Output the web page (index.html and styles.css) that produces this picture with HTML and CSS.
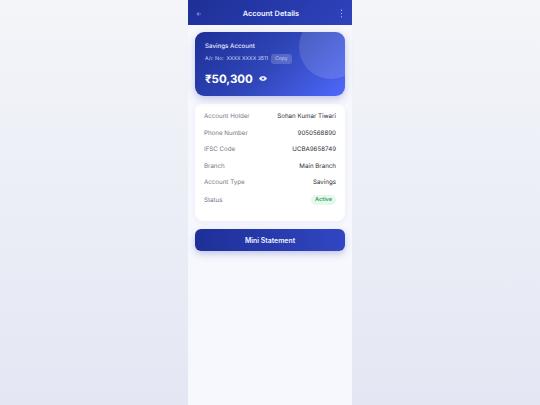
FILE: index.html
```html
<!DOCTYPE html>
<html lang="en">
<head>
<meta charset="utf-8">
<title>Account Details</title>
<link rel="stylesheet" href="styles.css">
</head>
<body>
<main class="phone">
  <header class="topbar">
    <span class="back">←</span>
    <h1 class="title">Account Details</h1>
    <svg class="more" width="3" height="9" viewBox="0 0 3 9"><circle cx="1.5" cy="1.2" r=".6"/><circle cx="1.5" cy="4.500" r=".6"/><circle cx="1.5" cy="7.800" r=".6"/></svg>
  </header>
  <div class="content">
    <section class="balance">
      <div class="circle"></div>
      <div class="acct-type">Savings Account</div>
      <div class="acct-no"><span>A/c No:&nbsp; XXXX XXXX 3511</span><span class="copy">Copy</span></div>
      <div class="amount"><span>₹50,300</span>
        <svg class="eye" width="8" height="5" viewBox="0 0 24 15"><path fill-rule="evenodd" d="M12 0C6.500 0 2.200 3 0 7.500 2.200 12 6.500 15 12 15s9.800-3 12-7.500C21.800 3 17.500 0 12 0zm0 10.500a3 3 0 1 1 0-6 3 3 0 0 1 0 6z"/></svg>
      </div>
    </section>
    <section class="details">
      <div class="row"><span class="label">Account Holder</span><span class="value">Sohan Kumar Tiwari</span></div>
      <div class="row"><span class="label">Phone Number</span><span class="value">9050568890</span></div>
      <div class="row"><span class="label">IFSC Code</span><span class="value">UCBA9658749</span></div>
      <div class="row"><span class="label">Branch</span><span class="value">Main Branch</span></div>
      <div class="row"><span class="label">Account Type</span><span class="value">Savings</span></div>
      <div class="row"><span class="label">Status</span><span class="badge">Active</span></div>
    </section>
    <button class="cta">Mini Statement</button>
  </div>
</main>
</body>
</html>
```
FILE: styles.css
```css
* { box-sizing: border-box; }
html, body { height: 100%; }
body {
  margin: 0;
  height: 405px;
  overflow: hidden;
  display: flex;
  justify-content: center;
  background: linear-gradient(180deg, #f3f5f9 0%, #e4e7f3 100%);
  font-family: "Inter", "Open Sans", sans-serif;
  text-rendering: geometricPrecision;
}
.phone {
  width: 164px;
  height: 405px;
  background: #f7f8fd;
  display: flex;
  flex-direction: column;
}
.topbar {
  height: 25px;
  flex: none;
  display: flex;
  align-items: center;
  justify-content: space-between;
  padding: 1px 9px 0 8px;
  background: linear-gradient(135deg, #1e2f97, #2f43bd);
  color: #fff;
}
.back { font-size: 6px; color: #aeb6e8; line-height: 1; margin-top: 3px; }
.title { margin: 0; font-size: 7.400px; font-weight: 600; color: #f0f2ff; }
.more { fill: #c9cff2; }
.content {
  padding: 7px 7px 0;
  display: flex;
  flex-direction: column;
  gap: 8px;
}
.balance {
  position: relative;
  overflow: hidden;
  height: 64px;
  padding: 10px 10px 0;
  border-radius: 9px;
  background: linear-gradient(135deg, #1e2f97 0%, #2f46b8 50%, #4f68fb 100%);
  box-shadow: 0 3px 8px rgba(30,47,151,.25);
  color: #fff;
}
.circle {
  position: absolute;
  right: -18px;
  top: -17px;
  width: 64px;
  height: 64px;
  border-radius: 50%;
  background: rgba(255,255,255,.13);
}
.acct-type { position: relative; font-size: 6.200px; font-weight: 500; line-height: 9px; color: #e6e9ff; }
.acct-no {
  position: relative;
  display: flex;
  align-items: center;
  gap: 3px;
  margin-top: 3px;
  font-size: 5.200px;
  line-height: 10px;
  color: #d3d9f7;
}
.copy {
  padding: 0 4px;
  border-radius: 3px;
  background: rgba(255,255,255,.18);
  color: #c3caf2;
  font-size: 5px;
}
.amount {
  position: relative;
  display: flex;
  align-items: center;
  gap: 6px;
  margin-top: 7.500px;
  font-size: 11.500px;
  font-weight: 700;
  line-height: 14px;
}
.eye { fill: #e4e8ff; }
.details {
  height: 117px;
  padding: 4px 9px 0;
  background: #fff;
  border-radius: 8px;
  box-shadow: 0 2px 6px rgba(30,47,151,.05);
}
.row {
  display: flex;
  align-items: center;
  justify-content: space-between;
  height: 16.500px;
  font-size: 6.200px;
  padding-top: 1px;
}
.label { color: #71757f; }
.value { color: #2b2b33; font-weight: 400; }
.badge {
  padding: 0 4px;
  border-radius: 5px;
  background: #e6f8ec;
  color: #2fa25a;
  font-size: 5.500px;
  font-weight: 600;
  line-height: 10px;
}
.row:last-child { margin-top: 1px; }
.cta {
  height: 22px;
  border: 0;
  border-radius: 6px;
  background: linear-gradient(90deg, #1e2f97, #3146c2);
  box-shadow: 0 3px 7px rgba(30,47,151,.25);
  color: #f0f2ff;
  font-family: inherit;
  font-size: 6.900px;
  font-weight: 600;
}
```
